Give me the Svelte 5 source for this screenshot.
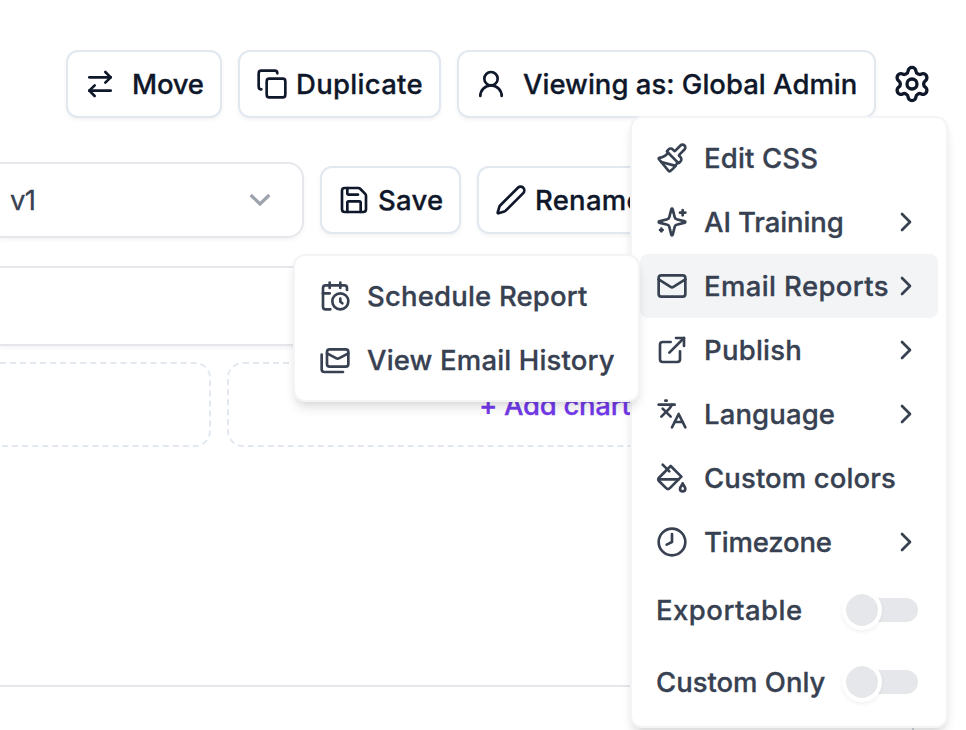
<script>
  const icons = {
    move: '<path d="m16 3 4 4-4 4"/><path d="M20 7H4"/><path d="m8 21-4-4 4-4"/><path d="M4 17h16"/>',
    copy: '<rect width="14" height="14" x="8" y="8" rx="2"/><path d="M4 16c-1.1 0-2-.9-2-2V4c0-1.1.9-2 2-2h10c1.1 0 2 .9 2 2"/>',
    user: '<circle cx="12" cy="8" r="5"/><path d="M20 21a8 8 0 0 0-16 0"/>',
    settings: '<path d="M9.671 4.136a2.34 2.34 0 0 1 4.659 0 2.34 2.34 0 0 0 3.319 1.915 2.34 2.34 0 0 1 2.33 4.033 2.34 2.34 0 0 0 0 3.831 2.34 2.34 0 0 1-2.33 4.033 2.34 2.34 0 0 0-3.319 1.915 2.34 2.34 0 0 1-4.659 0 2.34 2.34 0 0 0-3.32-1.915 2.34 2.34 0 0 1-2.33-4.033 2.34 2.34 0 0 0 0-3.831A2.34 2.34 0 0 1 6.35 6.051a2.34 2.34 0 0 0 3.319-1.915"/><circle cx="12" cy="12" r="3"/>',
    save: '<path d="M15.2 3a2 2 0 0 1 1.4.6l3.8 3.8a2 2 0 0 1 .6 1.4V19a2 2 0 0 1-2 2H5a2 2 0 0 1-2-2V5a2 2 0 0 1 2-2z"/><path d="M17 21v-7a1 1 0 0 0-1-1H8a1 1 0 0 0-1 1v7"/><path d="M7 3v4a1 1 0 0 0 1 1h7"/>',
    pen: '<path d="M21.174 6.812a1 1 0 0 0-3.986-3.987L3.842 16.174a2 2 0 0 0-.5.83l-1.321 4.352a.5.5 0 0 0 .623.622l4.353-1.32a2 2 0 0 0 .83-.497z"/>',
    brush: '<path d="m14.622 17.897-10.68-2.913"/><path d="M18.376 2.622a1 1 0 1 1 3.002 3.002L17.36 9.643a.5.5 0 0 0 0 .707l.944.944a2.41 2.41 0 0 1 0 3.408l-.944.944a.5.5 0 0 1-.707 0L8.354 7.348a.5.5 0 0 1 0-.707l.944-.944a2.41 2.41 0 0 1 3.408 0l.944.944a.5.5 0 0 0 .707 0z"/><path d="M9 8c-1.804 2.71-3.97 3.46-6.583 3.948a.507.507 0 0 0-.302.819l7.32 8.883a1 1 0 0 0 1.185.204C12.735 20.405 16 16.792 16 15"/>',
    sparkles: '<path d="M9.937 15.5A2 2 0 0 0 8.5 14.063l-6.135-1.582a.5.5 0 0 1 0-.962L8.5 9.936A2 2 0 0 0 9.937 8.5l1.582-6.135a.5.5 0 0 1 .963 0L14.063 8.5A2 2 0 0 0 15.5 9.937l6.135 1.581a.5.5 0 0 1 0 .964L15.5 14.063a2 2 0 0 0-1.437 1.437l-1.582 6.135a.5.5 0 0 1-.963 0z"/><path d="M20 3v4"/><path d="M22 5h-4"/><path d="M4 17v2"/><path d="M5 18H3"/>',
    mail: '<rect width="20" height="16" x="2" y="4" rx="2"/><path d="m22 7-8.97 5.7a1.94 1.94 0 0 1-2.06 0L2 7"/>',
    external: '<path d="M15 3h6v6"/><path d="M10 14 21 3"/><path d="M18 13v6a2 2 0 0 1-2 2H5a2 2 0 0 1-2-2V8a2 2 0 0 1 2-2h6"/>',
    languages: '<path d="m5 8 6 6"/><path d="m4 14 6-6 2-3"/><path d="M2 5h12"/><path d="M7 2h1"/><path d="m22 22-5-10-5 10"/><path d="M14 18h6"/>',
    bucket: '<path d="m19 11-8-8-8.6 8.6a2 2 0 0 0 0 2.8l5.2 5.2c.8.8 2 .8 2.8 0L19 11Z"/><path d="m5 2 5 5"/><path d="M2 13h15"/><path d="M22 20a2 2 0 1 1-4 0c0-1.6 1.7-2.4 2-4 .3 1.6 2 2.4 2 4Z"/>',
    clock: '<circle cx="12" cy="12" r="10"/><path d="M12 6v6l-4 2"/>',
    chevron: '<path d="m9 18 6-6-6-6"/>',
    schedule: '<path d="M21 7.5V6a2 2 0 0 0-2-2H5a2 2 0 0 0-2 2v14a2 2 0 0 0 2 2h3.5"/><path d="M16 2v4"/><path d="M8 2v4"/><path d="M3 10h5"/><path d="M17.5 17.5 16 16.3V14"/><circle cx="16" cy="16" r="6"/>',
    mails: '<rect width="16" height="13" x="6" y="4" rx="2"/><path d="m22 7-7.1 3.78c-.57.3-1.23.3-1.8 0L6 7"/><path d="M2 8v11c0 1.1.9 2 2 2h14"/>'
  };

  // sp is the tracking of each label, in pixels
  const menu = [
    { icon: 'brush', label: 'Edit CSS', sp: 0.15 },
    { icon: 'sparkles', label: 'AI Training', sub: true, sp: -0.1 },
    { icon: 'mail', label: 'Email Reports', sub: true, active: true, sp: 0.38 },
    { icon: 'external', label: 'Publish', sub: true, sp: 0.25 },
    { icon: 'languages', label: 'Language', sub: true, sp: 0.12 },
    { icon: 'bucket', label: 'Custom colors', sp: 0.12 },
    { icon: 'clock', label: 'Timezone', sub: true, sp: -0.18 }
  ];
  const toggles = [
    { label: 'Exportable', sp: 0.48 },
    { label: 'Custom Only', sp: -0.02 }
  ];
  const reports = [
    { icon: 'schedule', label: 'Schedule Report', sp: 0.18 },
    { icon: 'mails', label: 'View Email History', sp: 0.16 }
  ];
</script>

{#snippet icon(name)}
  <svg class="icon" class:large={name === 'settings'} viewBox="0 0 24 24">{@html icons[name]}</svg>
{/snippet}

{#snippet label(text, sp)}
  <span class="t" style="letter-spacing: {sp}px">{text}</span>
{/snippet}

<div class="page">
  <header class="actions">
    <button class="btn wide move">{@render icon('move')}{@render label('Move', -0.2)}</button>
    <button class="btn duplicate">{@render icon('copy')}{@render label('Duplicate', 0.3)}</button>
    <button class="btn wide viewing">{@render icon('user')}{@render label('Viewing as: Global Admin', 0)}</button>
    <button class="gear" aria-label="Settings">{@render icon('settings')}</button>
  </header>

  <div class="versions">
    <div class="select">
      {@render label('v1', -0.8)}
      <svg class="caret" viewBox="0 0 24 16"><path d="m2.7 3 9.3 9 9.3-9" /></svg>
    </div>
    <button class="btn save">{@render icon('save')}{@render label('Save', 0.25)}</button>
    <button class="btn rename">{@render icon('pen')}{@render label('Rename', 0.25)}</button>
  </div>

  <section class="panel"></section>
  <section class="slots">
    <div class="slot first"></div>
    <div class="slot second">{@render label('+ Add chart', -0.3)}</div>
  </section>
  <div class="rule"></div>
  <div class="divider"></div>

  <nav class="menu">
    {#each menu as item}
      <div class="item" class:active={item.active}>
        {@render icon(item.icon)}
        {@render label(item.label, item.sp)}
        {#if item.sub}<span class="more">{@render icon('chevron')}</span>{/if}
      </div>
    {/each}
    {#each toggles as item}
      <div class="toggle-row">
        {@render label(item.label, item.sp)}
        <span class="switch"><i></i></span>
      </div>
    {/each}
  </nav>

  <nav class="submenu">
    {#each reports as item}
      <div class="item">
        {@render icon(item.icon)}
        {@render label(item.label, item.sp)}
      </div>
    {/each}
  </nav>
</div>

<style>
  :global(body) { margin: 0; background: #fff; }
  .page {
    position: relative;
    box-sizing: border-box;
    width: 966px;
    height: 730px;
    padding-top: 50px;
    overflow: hidden;
    background: #fff;
    color: #374151;
    font: 500 27.5px/40px Inter, 'Liberation Sans', sans-serif;
  }
  .page * { box-sizing: border-box; }
  .t { white-space: nowrap; -webkit-text-stroke: 0.3px currentColor; }
  .icon {
    width: 32px;
    height: 32px;
    flex: none;
    fill: none;
    stroke: currentColor;
    stroke-width: 2;
    stroke-linecap: round;
    stroke-linejoin: round;
  }
  .icon.large { width: 40px; height: 40px; }
  .actions { display: flex; gap: 16px; height: 68px; padding-left: 66px; }
  .btn {
    display: flex;
    flex: none;
    align-items: center;
    gap: 8px;
    height: 68px;
    padding: 0 16px;
    border: 2px solid #e2e8f0;
    border-radius: 12px;
    background: #fff;
    box-shadow: 0 2px 4px rgb(0 0 0 / 5%);
    color: #0f172a;
    font: inherit;
  }
  .btn.wide { gap: 16px; }
  .move { width: 156px; }
  .duplicate { width: 203px; }
  .viewing { width: 419px; }
  .gear {
    display: flex;
    align-items: center;
    padding: 0;
    border: 0;
    background: none;
    color: #0f172a;
  }
  .versions { display: flex; align-items: center; gap: 16px; height: 76px; margin-top: 44px; }
  .select {
    display: flex;
    align-items: center;
    justify-content: space-between;
    width: 304px;
    height: 76px;
    padding: 0 30px 0 10px;
    border: 2px solid #e5e7eb;
    border-left: 0;
    border-radius: 0 16px 16px 0;
    box-shadow: 0 2px 4px rgb(0 0 0 / 5%);
    font-weight: 400;
  }
  .caret { width: 24px; height: 16px; fill: none; stroke: #9ca3af; stroke-width: 3.2; }
  .save { width: 141px; }
  .rename { width: 180px; }
  .panel {
    width: 930px;
    height: 80px;
    margin-top: 28px;
    border: solid #e5e7eb;
    border-width: 2px 0;
    box-shadow: 0 2px 4px rgb(0 0 0 / 5%);
  }
  .slots { display: flex; gap: 16px; height: 85px; margin-top: 16px; }
  .slot { flex: none; border: 2px dashed #e2e8f0; border-radius: 16px; }
  .first { width: 211px; border-left: 0; border-radius: 0 16px 16px 0; }
  .second { width: 662px; padding: 21px 0 0 250px; color: #7239ea; }
  .rule { width: 930px; height: 2px; margin-top: 238px; background: #e5e7eb; }
  .divider { width: 2px; height: 43px; margin-left: 912px; background: #d1d5db; }
  .menu, .submenu {
    position: absolute;
    padding: 8px;
    border: 2px solid #f3f4f6;
    border-radius: 12px;
    background: #fff;
    box-shadow: 0 8px 12px -2px rgb(0 0 0 / 10%), 0 4px 8px -4px rgb(0 0 0 / 10%);
  }
  .menu { top: 116px; left: 630px; width: 318px; height: 612px; }
  .submenu { top: 254px; left: 293px; width: 347px; height: 148px; }
  .item {
    display: flex;
    align-items: center;
    gap: 16px;
    height: 64px;
    padding: 0 16px;
    border-radius: 8px;
  }
  .active { background: #f3f4f6; }
  .more { display: flex; margin-left: auto; }
  .active .more { margin-left: -15px; }
  .toggle-row {
    display: flex;
    align-items: center;
    justify-content: space-between;
    height: 72px;
    padding: 0 20px 0 16px;
  }
  .switch {
    display: flex;
    align-items: center;
    width: 72px;
    height: 24px;
    border-radius: 12px;
    background: #e5e7eb;
  }
  .switch i {
    flex: none;
    width: 40px;
    height: 40px;
    margin-left: -4px;
    border: 4px solid #fff;
    border-radius: 50%;
    background: #e5e7eb;
    background-clip: padding-box;
    box-shadow: 0 2px 4px rgb(0 0 0 / 6%);
  }
</style>
